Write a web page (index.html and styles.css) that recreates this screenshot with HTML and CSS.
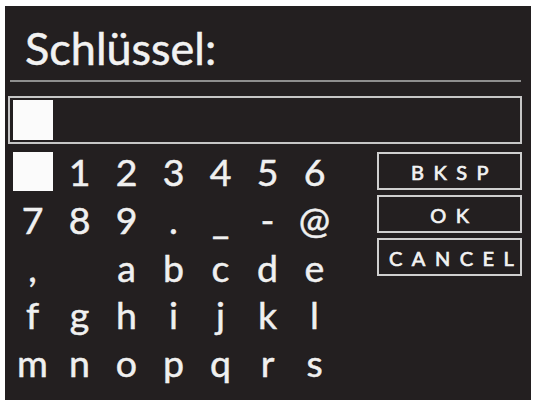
FILE: index.html
```html
<!DOCTYPE html>
<html lang="de">
<head>
<meta charset="utf-8">
<title>Schlüssel</title>
<link rel="stylesheet" href="styles.css">
</head>
<body>
<div class="panel">
  <div class="title">Schlüssel:</div>
  <div class="sep"></div>
  <div class="input"><div class="cursor"></div></div>
  <div class="keyboard">
    <div class="keys">
      <div class="key"><div class="sel"></div></div>
      <div class="key">1</div><div class="key">2</div><div class="key">3</div><div class="key">4</div><div class="key">5</div><div class="key">6</div>
      <div class="key">7</div><div class="key">8</div><div class="key">9</div><div class="key">.</div><div class="key">_</div><div class="key">-</div><div class="key">@</div>
      <div class="key">,</div><div class="key">&nbsp;</div><div class="key">a</div><div class="key">b</div><div class="key">c</div><div class="key">d</div><div class="key">e</div>
      <div class="key">f</div><div class="key">g</div><div class="key">h</div><div class="key">i</div><div class="key">j</div><div class="key">k</div><div class="key">l</div>
      <div class="key">m</div><div class="key">n</div><div class="key">o</div><div class="key">p</div><div class="key">q</div><div class="key">r</div><div class="key">s</div>
    </div>
    <div class="buttons">
      <div class="btn">BKSP</div>
      <div class="btn">OK</div>
      <div class="btn">CANCEL</div>
    </div>
  </div>
</div>
</body>
</html>
```
FILE: styles.css
```css
html, body {
  margin: 0;
  padding: 0;
  background: #ffffff;
}
body {
  font-family: Lato, "Open Sans", sans-serif;
  color: #f0f0f0;
}
.panel {
  margin: 6px 0 0 5px;
  width: 526px;
  height: 394px;
  box-sizing: border-box;
  background: #231f20;
  padding: 15px 9px 0 3px;
  overflow: hidden;
}
.title {
  font-size: 45px;
  line-height: 54px;
  padding-left: 17px;
  color: #f2f2f2;
  -webkit-text-stroke: 0.5px #f2f2f2;
}
.sep {
  height: 2px;
  margin: 5px 1px 0 2px;
  background: #8e8e8e;
}
.input {
  margin-top: 14px;
  border: 2px solid #c6c6c6;
  padding: 2px 3px;
}
.cursor {
  width: 40px;
  height: 40px;
  background: #fbfbfb;
}
.keyboard {
  margin-top: 4px;
  display: flex;
  justify-content: space-between;
  align-items: flex-start;
}
.keys {
  margin-left: 1px;
  display: grid;
  grid-template-columns: repeat(7, 47px);
  grid-auto-rows: 47.75px;
  font-size: 37.5px;
  line-height: 47.75px;
  text-align: center;
  -webkit-text-stroke: 0.5px #f0f0f0;
}
.key {
  display: flex;
  align-items: center;
  justify-content: center;
}
.sel {
  width: 40px;
  height: 39px;
  background: #fbfbfb;
}
.buttons {
  margin-top: 4px;
  width: 145px;
  display: flex;
  flex-direction: column;
  gap: 5px;
}
.btn {
  height: 38px;
  box-sizing: border-box;
  border: 2px solid #cfcfcf;
  padding: 3px 0 0 10px;
  line-height: 31px;
  text-align: center;
  font-size: 20px;
  font-weight: 400;
  letter-spacing: 9.5px;
  color: #f2f2f2;
  -webkit-text-stroke: 0.7px #f2f2f2;
}
```
